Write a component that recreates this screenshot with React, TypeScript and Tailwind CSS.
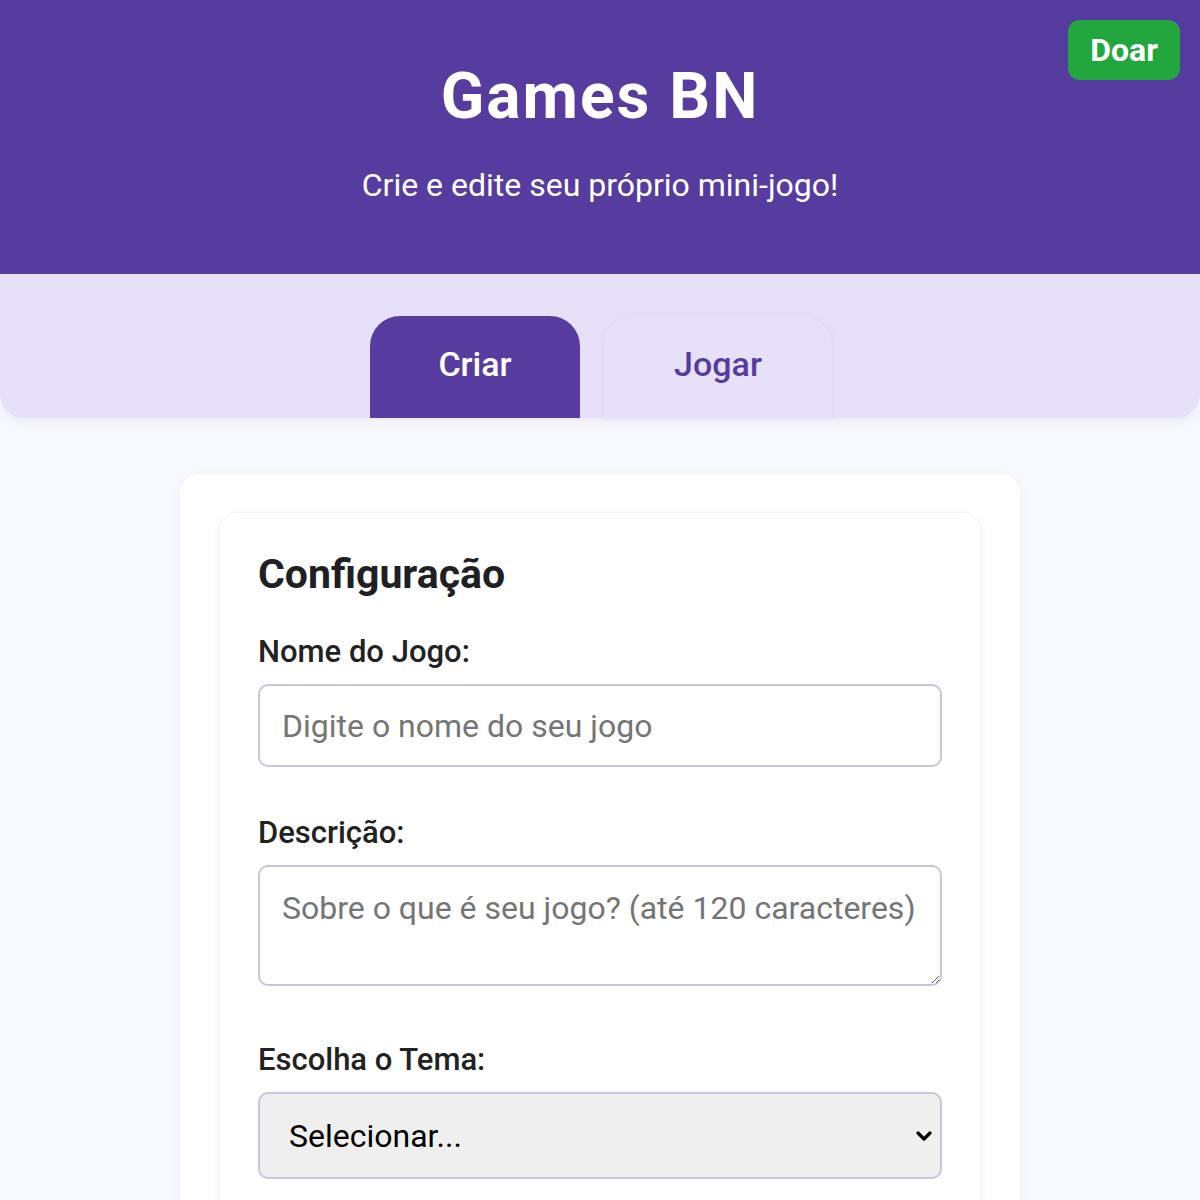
import { useState } from 'react';

export default function App() {
  const [tab, setTab] = useState<'criar' | 'jogar'>('criar');

  return (
    <div className="min-h-screen bg-[#f8f9fd] font-['Roboto','Liberation_Sans',sans-serif]">
      {/* Header */}
      <header className="relative h-[274px] bg-[#563c9f] flex flex-col items-center text-white">
        <h1 className="mt-[58px] text-[64px] leading-[78px] font-bold tracking-[2px]">Games BN</h1>
        <p className="mt-[30px] text-[32px] leading-[38px]">Crie e edite seu próprio mini-jogo!</p>
        <button className="absolute top-[20px] right-[20px] w-[112px] h-[60px] rounded-[12px] bg-[#22a63e] text-[32px] font-bold text-white">
          Doar
        </button>
      </header>

      {/* Tabs */}
      <nav className="h-[144px] bg-[#e6e1f9] rounded-b-[24px] shadow-[0_4px_8px_rgba(90,70,160,0.08)] flex items-end justify-center gap-[24px] pl-[2px]">
        <button
          onClick={() => setTab('criar')}
          className={
            tab === 'criar'
              ? 'w-[210px] h-[102px] rounded-t-[30px] bg-[#563c9f] text-white text-[34px] font-medium pb-[6px]'
              : 'w-[228px] h-[102px] rounded-t-[30px] bg-[#e6e1f9] text-[#563c9f] text-[34px] font-medium shadow-[0_0_6px_rgba(90,70,160,0.08)] pb-[6px]'
          }
        >
          Criar
        </button>
        <button
          onClick={() => setTab('jogar')}
          className={
            tab === 'jogar'
              ? 'w-[228px] h-[102px] rounded-t-[30px] bg-[#563c9f] text-white text-[34px] font-medium pb-[6px]'
              : 'w-[228px] h-[102px] rounded-t-[30px] bg-[#e6e1f9] text-[#563c9f] text-[34px] font-medium shadow-[0_0_6px_rgba(90,70,160,0.08)] pb-[6px]'
          }
        >
          Jogar
        </button>
      </nav>

      {/* Content */}
      <main className="flex justify-center pt-[56px] pb-[40px]">
        <div className="w-[840px] bg-white rounded-[20px] shadow-[0_2px_10px_rgba(60,60,120,0.06)] p-[38px]">
          <section className="rounded-[20px] bg-white border border-[#f3f3f7] shadow-[0_2px_8px_rgba(60,60,120,0.05)] px-[39px] pt-[34px] pb-[40px]">
            <h2 className="text-[41px] leading-[54px] font-bold text-[#1f1f24]">Configuração</h2>

            <label className="block mt-[32px] text-[31px] leading-[38px] font-medium text-[#222]">Nome do Jogo:</label>
            <input
              type="text"
              placeholder="Digite o nome do seu jogo"
              className="mt-[13px] block w-full h-[83px] rounded-[10px] border-2 border-[#c9c5dd] px-[22px] text-[32px] text-[#333] placeholder:text-[#757575] outline-none"
            />

            <label className="block mt-[47px] text-[31px] leading-[38px] font-medium text-[#222]">Descrição:</label>
            <textarea
              placeholder="Sobre o que é seu jogo? (até 120 caracteres)"
              maxLength={120}
              className="mt-[13px] block w-full h-[121px] rounded-[10px] border-2 border-[#c9c5dd] px-[22px] pt-[20px] text-[32px] leading-[42px] text-[#333] placeholder:text-[#757575] outline-none"
            />

            <label className="block mt-[55px] text-[31px] leading-[38px] font-medium text-[#222]">Escolha o Tema:</label>
            <div className="relative mt-[13px]">
              <select className="block w-full h-[87px] appearance-none rounded-[10px] border-2 border-[#c9c5dd] bg-[#efefef] pl-[29px] pr-[60px] text-[32px] text-black outline-none">
                <option>Selecionar...</option>
                <option>Aventura</option>
                <option>Espaço</option>
                <option>Corrida</option>
              </select>
              <svg
                className="absolute right-[8px] top-1/2 -translate-y-1/2 pointer-events-none"
                width="20"
                height="14"
                viewBox="0 0 20 14"
              >
                <path d="M4 4 L10 10 L16 4" fill="none" stroke="#000" strokeWidth="3.2" strokeLinecap="round" strokeLinejoin="round" />
              </svg>
            </div>
          </section>
        </div>
      </main>
    </div>
  );
}
